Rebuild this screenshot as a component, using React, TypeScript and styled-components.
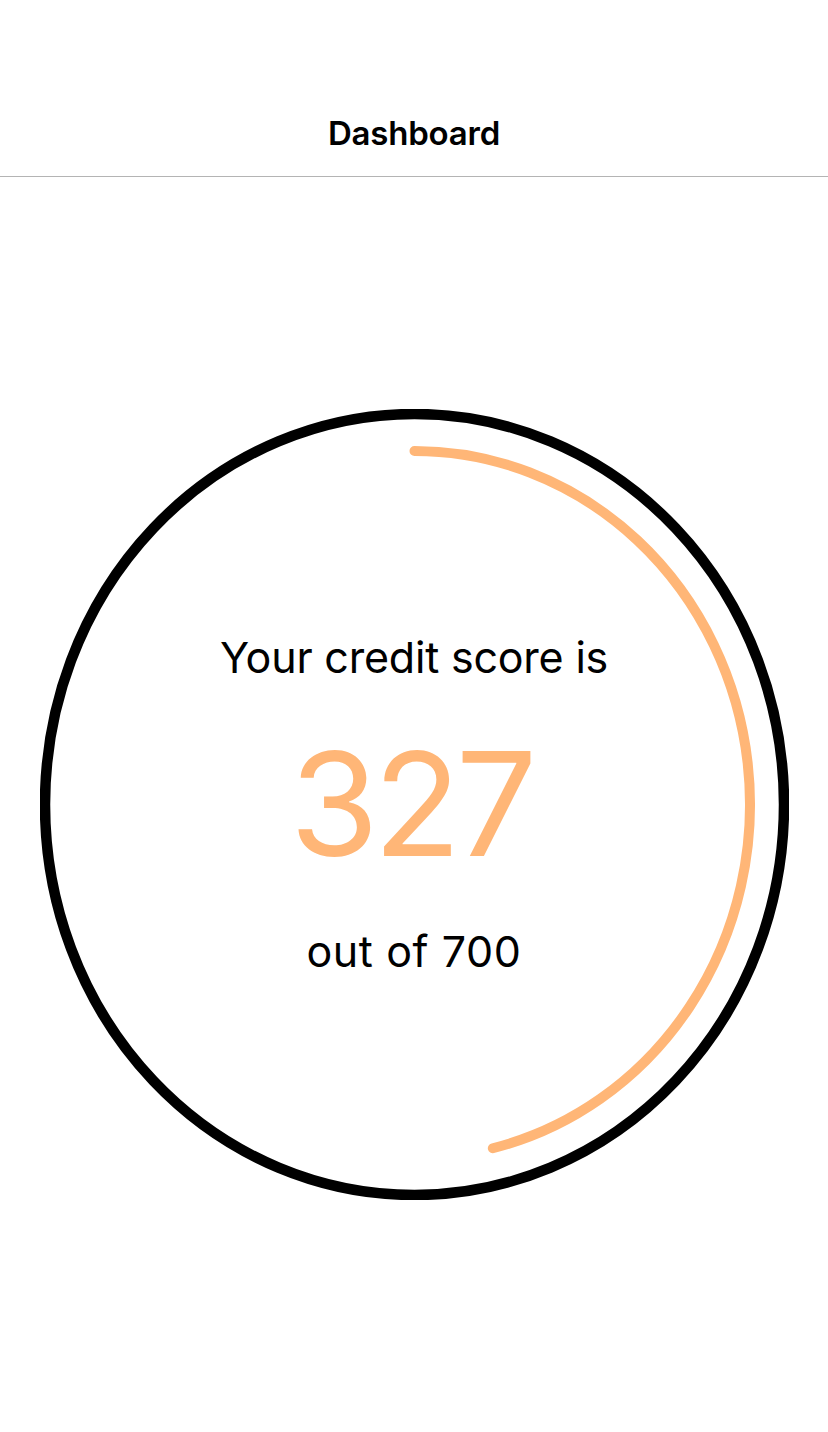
import React from "react";
import styled, { createGlobalStyle } from "styled-components";

const Global = createGlobalStyle`
  html, body { margin: 0; padding: 0; background: #ffffff; }
  body { font-family: Inter, "Open Sans", "Liberation Sans", sans-serif; color: #000; }
`;

const Screen = styled.div`
  display: flex;
  flex-direction: column;
  height: 1432px;
  width: 828px;
  overflow: hidden;
`;

const Header = styled.header`
  height: 177px;
  box-sizing: border-box;
  border-bottom: 1px solid #b4b4b4;
  display: flex;
  align-items: flex-end;
  justify-content: center;
  padding-bottom: 23px;
`;

const Title = styled.h1`
  margin: 0;
  font-size: 33px;
  font-weight: 600;
  letter-spacing: -0.2px;
  line-height: 40px;
`;

const Content = styled.main`
  flex: 1;
  display: flex;
  align-items: center;
  justify-content: center;
  padding-bottom: 1px;
`;

const Gauge = styled.div`
  display: grid;
  width: 749px;
  height: 791px;
  & > * { grid-area: 1 / 1; }
`;

const Ring = styled.svg`
  display: block;
`;

const Info = styled.div`
  display: flex;
  flex-direction: column;
  align-items: center;
  justify-content: center;
`;

const Caption = styled.div<{ $tracking?: number }>`
  font-size: 43px;
  font-weight: 400;
  line-height: 56px;
  letter-spacing: ${(p) => p.$tracking ?? -0.2}px;
`;

const Score = styled.div<{ $color: string }>`
  font-size: 144px;
  font-weight: 400;
  line-height: 144px;
  color: ${(p) => p.$color};
  margin: 47px 0 47px;
  letter-spacing: -5.5px;
  padding-right: 6.5px;
`;

const W = 749;
const H = 791;
const CX = W / 2;
const CY = H / 2;

function arcPath(rx: number, ry: number, deg: number) {
  const t = (deg * Math.PI) / 180;
  const x0 = CX;
  const y0 = CY - ry;
  const x1 = CX + rx * Math.sin(t);
  const y1 = CY - ry * Math.cos(t);
  const large = deg > 180 ? 1 : 0;
  return `M ${x0} ${y0} A ${rx} ${ry} 0 ${large} 1 ${x1} ${y1}`;
}

export default function App() {
  const score = 327;
  const max = 700;
  const orange = "#FFB677";
  return (
    <>
      <Global />
      <Screen>
        <Header>
          <Title>Dashboard</Title>
        </Header>
        <Content>
          <Gauge>
            <Ring width={W} height={H} viewBox={`0 0 ${W} ${H}`}>
              <ellipse cx={CX} cy={CY} rx={369.5} ry={390.5} fill="none" stroke="#000" strokeWidth={10.5} />
              <path d={arcPath(335.5, 353.5, 166.5)} fill="none" stroke={orange} strokeWidth={10} strokeLinecap="round" />
            </Ring>
            <Info>
              <Caption>Your credit score is</Caption>
              <Score $color={orange}>{score}</Score>
              <Caption $tracking={0.6}>out of {max}</Caption>
            </Info>
          </Gauge>
        </Content>
      </Screen>
    </>
  );
}
